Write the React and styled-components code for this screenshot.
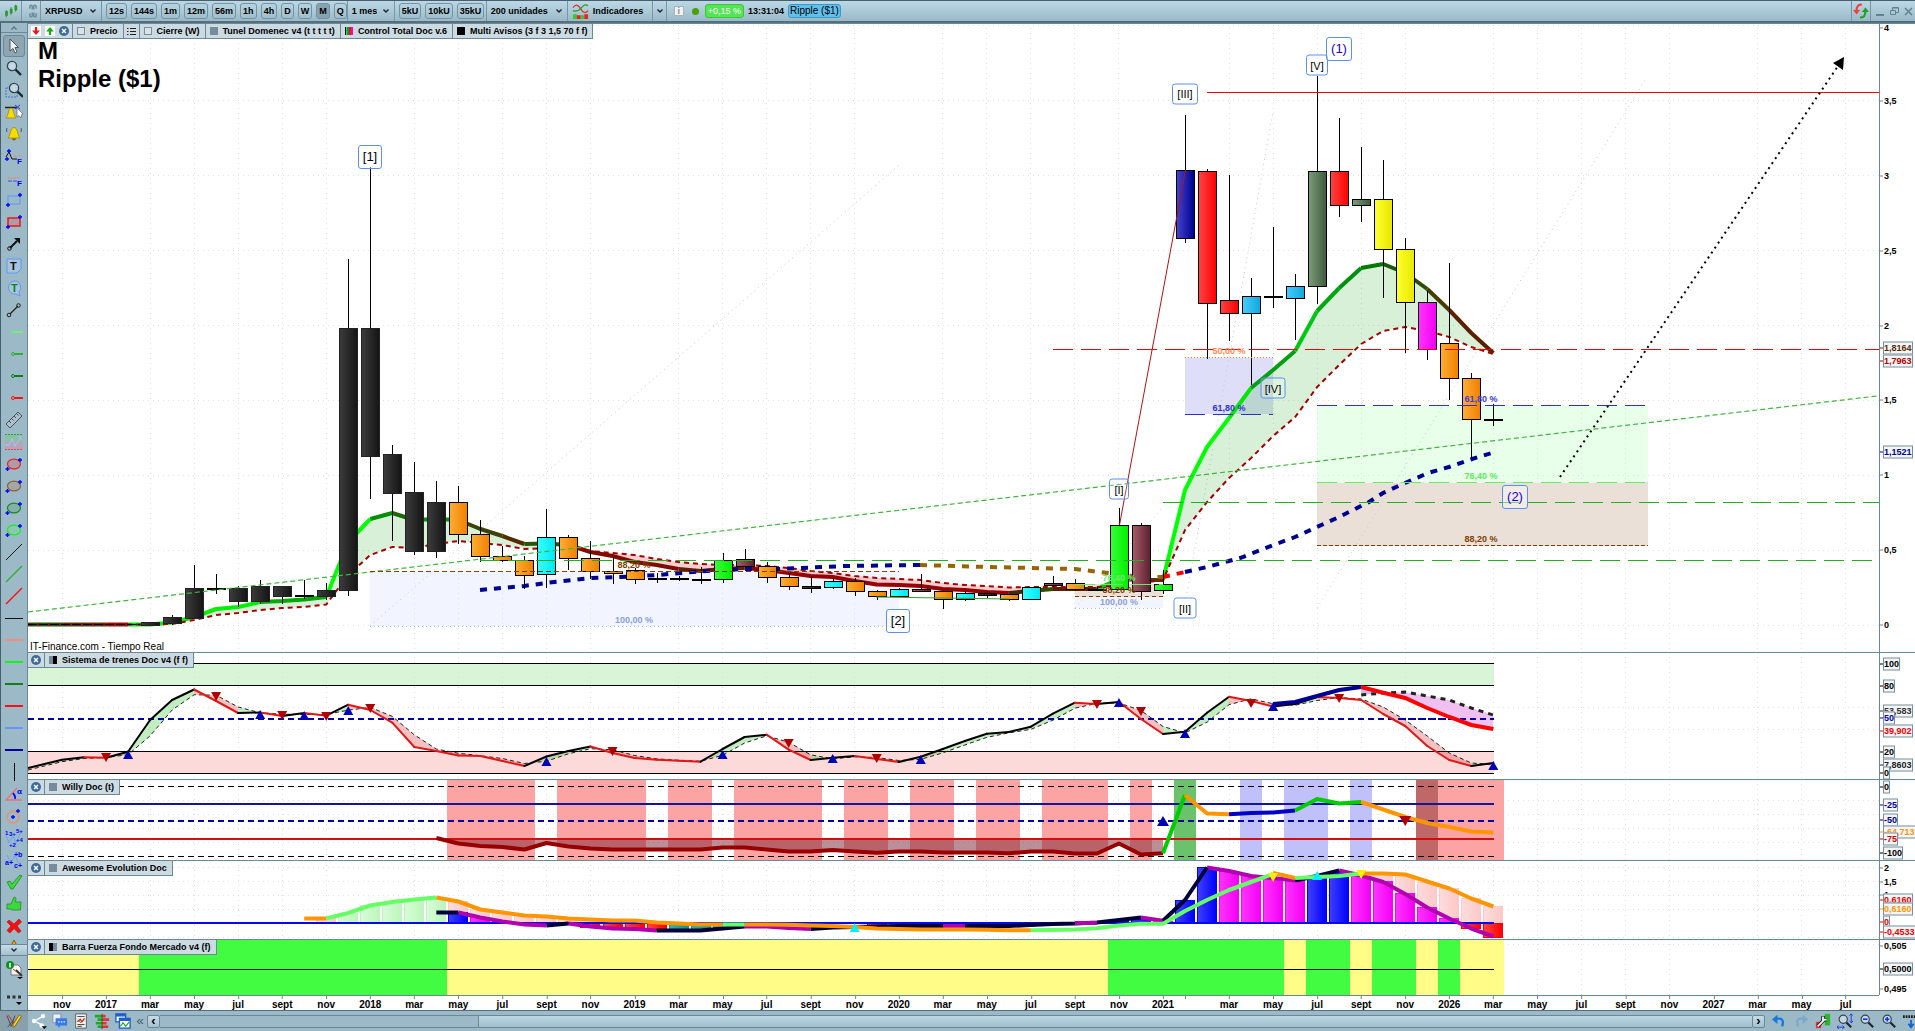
import React from 'react';
import styled, { createGlobalStyle } from 'styled-components';

// plot coordinates: one bar every 22px, prices at 150px per unit
const LEFT = 28;
const WIDTH = 1851;
const barX = (i) => 62 + 22.02 * i;
const priceY = (p) => 625.5 - 150 * p;
const leftPct = (x) => `${((x - LEFT) / WIDTH) * 100}%`;

const PANELS = {
  price: { top: 23, height: 629 },
  trains: { top: 652, height: 127 },
  willy: { top: 779, height: 81 },
  awesome: { top: 860, height: 79 },
  force: { top: 939, height: 56 },
};

const GRADIENTS = {
  black: ['#3c3c3c', '#141414'],
  orange: ['#ffae35', '#f08000'],
  cyan: ['#38ffff', '#00e8f4'],
  green: ['#38ff38', '#00ee00'],
  maroon: ['#a85c6a', '#5c2030'],
  navy: ['#4444cc', '#000090'],
  red: ['#ff4444', '#ff0000'],
  sky: ['#48ccff', '#10a8dc'],
  sage: ['#7c9c7c', '#3c5c3c'],
  yellow: ['#ffff30', '#e8e800'],
  magenta: ['#ff34ff', '#f400f4'],
  blue: ['#4040ff', '#0000ff'],
  teal: ['#2cb4b4', '#109090'],
  palegreen: ['#d8fcd8', '#bcf6bc'],
  palered: ['#fedcdc', '#fcc8c8'],
};

// [bar, high, bodyTop, bodyBottom, low, colour]
const CANDLES = [
  [4, 622, 622, 625, 625, 'black'],
  [5, 615, 617, 623, 625, 'black'],
  [6, 565, 588, 618, 619, 'black'],
  [7, 574, 588, 589, 594, 'black'],
  [8, 586, 588, 601, 607, 'black'],
  [9, 580, 586, 601, 604, 'black'],
  [10, 586, 586, 596, 604, 'black'],
  [11, 580, 595, 596, 599, 'black'],
  [12, 583, 590, 596, 600, 'black'],
  [13, 259, 328, 590, 596, 'black'],
  [14, 167, 328, 456, 499, 'black'],
  [15, 445, 454, 493, 541, 'black'],
  [16, 462, 492, 551, 555, 'black'],
  [17, 481, 502, 551, 558, 'black'],
  [18, 486, 502, 534, 544, 'orange'],
  [19, 520, 534, 556, 562, 'orange'],
  [20, 546, 556, 560, 562, 'orange'],
  [21, 556, 560, 575, 589, 'orange'],
  [22, 509, 537, 574, 588, 'cyan'],
  [23, 535, 537, 558, 570, 'orange'],
  [24, 541, 558, 571, 579, 'orange'],
  [25, 557, 571, 573, 584, 'orange'],
  [26, 568, 570, 579, 584, 'orange'],
  [27, 573, 578, 579, 583, 'black'],
  [28, 576, 578, 579, 581, 'black'],
  [29, 567, 579, 580, 584, 'black'],
  [30, 553, 560, 579, 583, 'green'],
  [31, 549, 559, 566, 568, 'maroon'],
  [32, 562, 566, 577, 583, 'orange'],
  [33, 573, 577, 586, 590, 'orange'],
  [34, 576, 586, 588, 593, 'black'],
  [35, 579, 581, 587, 589, 'cyan'],
  [36, 578, 581, 591, 596, 'orange'],
  [37, 590, 591, 596, 600, 'orange'],
  [38, 588, 589, 596, 597, 'cyan'],
  [39, 574, 589, 591, 592, 'maroon'],
  [40, 591, 591, 599, 609, 'orange'],
  [41, 592, 593, 599, 601, 'cyan'],
  [42, 591, 593, 595, 598, 'black'],
  [43, 594, 594, 599, 601, 'orange'],
  [44, 587, 587, 599, 600, 'cyan'],
  [45, 576, 583, 585, 587, 'maroon'],
  [46, 579, 583, 589, 591, 'orange'],
  [47, 587, 589, 590, 591, 'black'],
  [48, 508, 525, 589, 589, 'green'],
  [49, 523, 525, 591, 600, 'maroon'],
  [50, 570, 584, 590, 594, 'green'],
  [51, 115, 170, 238, 243, 'navy'],
  [52, 169, 171, 303, 359, 'red'],
  [53, 175, 300, 313, 341, 'red'],
  [54, 278, 296, 313, 385, 'sky'],
  [55, 227, 296, 297, 308, 'red'],
  [56, 274, 286, 298, 340, 'sky'],
  [57, 76, 171, 286, 304, 'sage'],
  [58, 118, 171, 205, 217, 'red'],
  [59, 147, 199, 205, 222, 'sage'],
  [60, 160, 199, 249, 298, 'yellow'],
  [61, 238, 249, 302, 353, 'yellow'],
  [62, 291, 302, 349, 360, 'magenta'],
  [63, 263, 343, 378, 400, 'orange'],
  [64, 373, 378, 419, 458, 'orange'],
  [65, 404, 419, 420, 426, 'black'],
];

const TUNNEL_TOP = [
  624.5, 624.5, 624.5, 624.5, 624.5, 622.5, 617, 609, 607, 602, 601, 599.5, 597, 542, 519, 513, 520,
  519, 520, 529, 536, 544, 543.5, 545, 552, 556, 562, 565, 569, 571, 569, 568, 570, 573, 576, 577,
  581, 584.5, 585, 586, 589, 590, 592, 593, 591, 589, 589, 589, 579, 580, 580, 490, 447, 418, 388,
  370, 351, 311, 288, 268, 264, 273, 289, 310, 333, 353,
];

const TUNNEL_LOW = [
  624.5, 624.5, 624.5, 624.5, 624.5, 624, 620, 615, 613, 610, 608, 607, 604.5, 575, 555, 547, 548,
  544, 541, 543, 545, 549, 548, 546, 551, 553, 555, 559, 562, 564, 565, 565, 566, 568, 571, 573,
  576, 578, 579, 580, 583, 585, 586, 587.5, 587, 587, 587, 587, 586, 583, 580, 530, 502, 478, 458,
  436, 417, 387, 365, 344, 331, 327, 331, 337, 347, 354,
];

// [last bar of the run, colour]
const TUNNEL_COLORS = [
  [2, '#55400a'], [3, '#a01010'], [9, '#00f000'], [12, '#00a800'], [14, '#00ff00'], [15, '#009000'],
  [16, '#1a6a00'], [18, '#0a9010'], [20, '#3a4400'], [21, '#552a00'], [23, '#245800'],
  [28, '#7a0c00'], [31, '#602000'], [43, '#960000'], [44, '#402a00'], [45, '#2a5000'],
  [47, '#5a2000'], [48, '#00d000'], [50, '#4a3a00'], [53, '#00ff00'], [54, '#00e800'],
  [56, '#00a010'], [57, '#00c810'], [58, '#00a810'], [59, '#009010'], [60, '#007a00'],
  [61, '#1a5a00'], [62, '#2f4d00'], [63, '#453c00'], [65, '#5a2000'],
];

const TRAIN = [
  759.7, 757.3, 757.7, 751.7, 720, 700, 689.5, 701, 713, 712.5, 716, 713, 715.7, 704.7, 710, 722.7,
  747, 751, 755.5, 756, 761, 766, 756.5, 751, 746.5, 753, 758, 759.7, 760.7, 761.7, 749, 737, 734.7,
  749.7, 760, 757.7, 756, 759, 762, 756.7, 749, 741, 733.7, 732, 726.7, 713.7, 702.7, 704, 702, 719,
  734, 731.7, 712.7, 696.7, 701, 706.5, 704, 697, 698, 700, 714, 726, 746, 760, 766, 763,
];

const TRAIN_MARKS = [
  ['down', 2, 757], ['up', 3, 755], ['down', 7, 696], ['up', 9, 715], ['down', 10, 715],
  ['up', 11, 716], ['down', 12, 716], ['up', 13, 711], ['down', 14, 708], ['up', 22, 762],
  ['down', 25, 751], ['up', 30, 755], ['down', 33, 743], ['up', 35, 759], ['down', 37, 758],
  ['up', 39, 760], ['down', 47, 704], ['up', 48, 703], ['down', 49, 711], ['up', 51, 734],
  ['down', 54, 703], ['up', 55, 707], ['down', 58, 698], ['up', 65, 766],
];

const WILLY_BANDS = [
  [17.5, 21.5, '#fca4a4'], [22.5, 26.5, '#fca4a4'], [27.5, 29.5, '#fca4a4'],
  [30.5, 34.5, '#fca4a4'], [35.5, 37.5, '#fca4a4'], [38.5, 40.5, '#fca4a4'],
  [41.5, 43.5, '#fca4a4'], [44.5, 47.5, '#fca4a4'], [48.5, 49.5, '#fca4a4'],
  [50.5, 51.5, '#6ac26a'], [53.5, 54.5, '#c0c0fa'], [55.5, 57.5, '#c0c0fa'],
  [58.5, 59.5, '#c0c0fa'], [61.5, 62.5, '#c06868'], [62.5, 65.5, '#fca4a4'],
];

const WILLY_LOW = [
  838, 843.5, 846, 847, 849.5, 843, 846.5, 848.5, 849.5, 849.5, 849.5, 849.5, 849.5, 847.5, 847.5,
  849.5, 851.5, 851.5, 850, 851.5, 852.7, 851.5, 851.5, 852.5, 852.5, 852.5, 853.3, 851.5, 851.5,
  853.5, 853.5, 843.5, 854.5, 853.3,
];

const FORCE_BANDS = [
  [-1.5, 3.5, 0], [3.5, 17.5, 1], [17.5, 47.5, 0], [47.5, 55.5, 1], [55.5, 56.5, 0],
  [56.5, 58.5, 1], [58.5, 59.5, 0], [59.5, 61.5, 1], [61.5, 62.5, 0], [62.5, 63.5, 1],
  [63.5, 65.5, 0],
];

// [bar, y, colour]
const AWESOME_BARS = [
  [12, 918, 'palered'], [13, 913, 'palegreen'], [14, 905, 'palegreen'], [15, 902, 'palegreen'],
  [16, 899, 'palegreen'], [17, 897, 'palegreen'], [18, 901, 'palered'], [19, 909, 'palered'],
  [20, 912, 'palered'], [21, 915, 'palered'], [22, 916, 'palered'], [23, 918, 'palered'],
  [24, 920, 'palered'], [25, 920, 'palered'], [18, 912, 'blue'], [19, 917, 'magenta'],
  [20, 921, 'magenta'], [24, 927, 'red'], [25, 928, 'red'], [26, 929, 'red'], [27, 930, 'red'],
  [28, 929, 'teal'], [29, 929, 'teal'], [30, 928, 'teal'], [37, 926, 'red'], [38, 926, 'teal'],
  [48, 920, 'blue'], [49, 918, 'blue'], [50, 921, 'magenta'], [51, 900, 'blue'], [52, 867, 'blue'],
  [53, 871, 'magenta'], [54, 875, 'magenta'], [55, 878, 'magenta'], [56, 880, 'magenta'],
  [57, 878, 'blue'], [58, 872, 'blue'], [59, 876, 'magenta'], [60, 874, 'palered'],
  [61, 875, 'palered'], [62, 882, 'palered'], [63, 888, 'palered'], [64, 898, 'palered'],
  [65, 906, 'palered'], [60, 881, 'magenta'], [61, 893, 'magenta'], [62, 907, 'magenta'],
  [63, 918, 'magenta'], [64, 928, 'red'], [65, 937, 'red'],
];

const MONTHS = ['nov', '', 'mar', 'may', 'jul', 'sept'];
const DATES = [];
for (let i = 0, n = 0; i <= 50; i += 2, n += 1) {
  const year = n % 6 === 1;
  DATES.push({ i, year, text: year ? String(2017 + (n - 1) / 6) : MONTHS[n % 6] });
}
['mar', 'may', 'jul', 'sept', 'nov', '2026', 'mar', 'may', 'jul', 'sept', 'nov', '2027', 'mar', 'may', 'jul'].forEach(
  (text, n) => DATES.push({ i: 53 + 2 * n, year: text.startsWith('20'), text })
);

const series = (from, ys) => ys.map((y, n) => `${barX(from + n)},${y}`).join(' ');

const Grid = ({ panel, rows }) => (
  <g stroke="#dfdfdf" strokeDasharray="1 4" shapeRendering="crispEdges">
    {DATES.filter((d) => !d.year).map((d) => (
      <line key={d.i} x1={barX(d.i)} x2={barX(d.i)} y1={panel.top} y2={panel.top + panel.height} />
    ))}
    {rows.map((y) => (
      <line key={y} x1={LEFT} x2={LEFT + WIDTH} y1={y} y2={y} />
    ))}
  </g>
);

const Chart = ({ panel, children }) => (
  <ChartSvg viewBox={`${LEFT} ${panel.top} ${WIDTH} ${panel.height}`} preserveAspectRatio="none" aria-hidden="true">
    {children}
  </ChartSvg>
);

const HLine = ({ y, x1 = LEFT, x2 = 1494, color = '#000', width = 1, dash }) => (
  <line x1={x1} x2={x2} y1={y} y2={y} stroke={color} strokeWidth={width} strokeDasharray={dash} shapeRendering="crispEdges" />
);

const Mark = ({ dir, i, y, size = 5, color }) => {
  const x = barX(i);
  const s = dir === 'up' ? 1 : -1;
  return (
    <polygon
      points={`${x - size},${y + 4 * s} ${x + size},${y + 4 * s} ${x},${y - size * s}`}
      fill={color || (dir === 'up' ? '#0000b8' : '#b00000')}
    />
  );
};

const Candle = ({ data }) => {
  const [i, high, top, bottom, low, color] = data;
  const x = Math.round(barX(i));
  return (
    <g shapeRendering="crispEdges">
      <rect x={x} y={high} width="1" height={low - high} fill="#000" />
      <rect
        x={x - 8.5}
        y={top + 0.5}
        width="18"
        height={Math.max(bottom - top, 0.5)}
        fill={`url(#fill-${color})`}
        stroke={color === 'black' ? (bottom - top < 3 ? '#000' : '#222') : '#000'}
      />
    </g>
  );
};

const PriceChart = () => {
  let start = -1;
  const runs = TUNNEL_COLORS.map(([end, color]) => {
    const from = Math.max(start, 0);
    const run = { from, ys: TUNNEL_TOP.slice(from, end + 1), color };
    start = end;
    return run;
  });
  const between = (a, b) =>
    `${series(a, TUNNEL_TOP.slice(a, b + 1))} ${TUNNEL_LOW.slice(a, b + 1)
      .map((y, n) => `${barX(a + n)},${y}`)
      .reverse()
      .join(' ')}`;
  return (
    <Chart panel={PANELS.price}>
      <defs>
        {Object.entries(GRADIENTS).map(([name, [a, b]]) => (
          <linearGradient key={name} id={`fill-${name}`}>
            <stop offset="0" stopColor={a} />
            <stop offset="1" stopColor={b} />
          </linearGradient>
        ))}
      </defs>
      <rect x="370" y="571" width="529" height="55" fill="#f2f5ff" />
      <rect x="1185" y="358" width="88" height="56" fill="#dedef8" />
      <rect x="1317" y="406" width="331" height="77" fill="#e8ffea" />
      <rect x="1317" y="483" width="331" height="63" fill="#eae0d8" />
      <rect x="1075" y="584" width="88" height="13" fill="#eae0d8" />
      <rect x="1075" y="597" width="88" height="11" fill="#f2f5ff" />
      <Grid panel={PANELS.price} rows={[0, 0.5, 1, 1.5, 2, 2.5, 3, 3.5, 4].map(priceY)} />
      <g stroke="#c8c8c8" strokeDasharray="1 4" fill="none">
        <path d="M370 626L899 165M1317 608L1647 77M1187 593L1273 112M1075 608L1163 507" />
      </g>
      <polygon points={between(4, 23)} fill="#3cb43c" fillOpacity=".2" />
      <polygon points={between(23, 44)} fill="#e82020" fillOpacity=".22" />
      <polygon points={between(50, 65)} fill="#3cb43c" fillOpacity=".2" />
      <polyline points="28,624.5 62,624.5" stroke="#1f6010" strokeWidth="4" fill="none" />
      {runs.map((r) => (
        <polyline key={r.from} points={series(r.from, r.ys)} stroke={r.color} strokeWidth="4" fill="none" strokeLinejoin="round" />
      ))}
      <polyline points={`28,624.5 ${series(0, TUNNEL_LOW)}`} stroke="#a00000" strokeWidth="2" strokeDasharray="5 4" fill="none" />
      <HLine y={624.5} x2={140} dash="9 2" />
      <g fill="none" strokeWidth="4" strokeDasharray="7 7">
        <polyline points="480,590 524,586 546,583 592,578 620,577 657,575 706,571 744,569 778,569 800,568 845,566 920,565" stroke="#000090" />
        <polyline points="920,565 988,567 1075,569 1108,573 1141,577 1163,577" stroke="#966400" />
        <polyline points="1163,577 1185,572" stroke="#ff0000" />
        <polyline
          points="1185,572 1207,567 1240,558 1279,543 1295,537 1317,527 1339,517 1369,502 1383,493 1405,483 1428,473 1449,467 1472,459 1492,453"
          stroke="#000090"
        />
      </g>
      {CANDLES.map((c) => (
        <Candle key={c[0]} data={c} />
      ))}
      <path d="M876 597L1009 599" stroke="#30a030" />
      <path d="M1119.5 525L1185.5 170" stroke="#b01414" />
      <path d="M28 612L1877 396" stroke="#40b440" strokeWidth="1.2" strokeDasharray="5 3" />
      <HLine y={92.5} x1={1207} x2={1879} color="#f00000" />
      <HLine y={349.5} x1={1053} x2={1879} color="#f00000" dash="20 8" />
      <HLine y={502.5} x1={1163} x2={1879} color="#20b020" dash="20 8" />
      <HLine y={560.5} x1={480} x2={1879} color="#20b020" dash="20 8" />
      <HLine y={571.5} x1={370} x2={899} color="#804000" dash="5 3" />
      <HLine y={626.5} x1={370} x2={899} color="#a8b8f0" dash="1 3" />
      <HLine y={357.5} x1={1185} x2={1273} color="#ff7040" dash="1 2" />
      <HLine y={414.5} x1={1185} x2={1273} color="#3030d0" dash="20 8" />
      <HLine y={405.5} x1={1317} x2={1648} color="#3030d0" dash="20 8" />
      <HLine y={482.5} x1={1317} x2={1648} color="#60f060" dash="20 8" />
      <HLine y={545.5} x1={1317} x2={1648} color="#804000" dash="4 2" />
      <HLine y={584.5} x1={1075} x2={1163} color="#60f060" dash="20 8" />
      <HLine y={596.5} x1={1075} x2={1163} color="#804000" dash="4 3" />
      <HLine y={608.5} x1={1075} x2={1163} color="#a8b8f0" dash="1 3" />
      <path d="M1560 477L1838 66" stroke="#000" strokeWidth="2" strokeDasharray="2 4" />
      <polygon points="1844,57 1833,63 1843,70" />
    </Chart>
  );
};

const TrainsChart = () => {
  const signal = TRAIN.map((y, n) => (n ? (y + TRAIN[n - 1]) / 2 : y + 2));
  return (
    <Chart panel={PANELS.trains}>
      <rect x="28" y="663" width="1466" height="22" fill="#d8f5d8" />
      <rect x="28" y="751" width="1466" height="22" fill="#fddada" />
      <Grid panel={PANELS.trains} rows={[707.5, 729.5]} />
      <polygon points={`28,768 ${barX(0)},${TRAIN[0]} ${barX(0)},${signal[0]} 28,770`} fill="#d0d8a8" />
      {TRAIN.slice(1).map((y, n) => {
        const [a, b] = [barX(n), barX(n + 1)];
        return (
          <polygon
            key={n}
            points={`${a},${TRAIN[n]} ${b},${y} ${b},${signal[n + 1]} ${a},${signal[n]}`}
            fill={y < TRAIN[n] ? '#20c020' : '#d02020'}
            fillOpacity=".28"
          />
        );
      })}
      <HLine y={663.5} />
      <HLine y={685.5} />
      <HLine y={718.5} color="#0000a0" width={2} dash="6 4" />
      <HLine y={751.5} />
      <HLine y={773.5} />
      <polyline points={`28,770 ${series(0, signal)}`} fill="none" stroke="#222" strokeDasharray="4 3" />
      <path d={`M28 768L${barX(0)} ${TRAIN[0]}`} stroke="#000" strokeWidth="2" />
      {TRAIN.slice(1).map((y, n) => (
        <line
          key={n}
          x1={barX(n)}
          y1={TRAIN[n]}
          x2={barX(n + 1)}
          y2={y}
          stroke={y < TRAIN[n] ? '#000' : '#e01818'}
          strokeWidth="2"
          strokeLinecap="round"
        />
      ))}
      <polygon points={`${series(59, [687, 693])} ${barX(60)},693 ${barX(59)},695`} fill="#c0c0e8" />
      <polygon points={`${series(60, [692.7, 698, 708, 717, 725, 729])} 1493,715 1472,708 1449,700 1428,696 1405,692 1383,693`} fill="#f0c0f0" />
      <HLine y={718.5} x1={1400} color="#0000a0" width={2} dash="6 4" />
      <polyline points={series(59, [695, 693, 692, 696, 700, 708, 715])} fill="none" stroke="#222" strokeWidth="3" strokeDasharray="5 5" />
      <polyline points={series(55, [704, 702, 696, 690, 687])} fill="none" stroke="#000090" strokeWidth="4" />
      <polyline points={series(59, [687, 692.7, 698, 708, 717, 725, 729])} fill="none" stroke="#ff0000" strokeWidth="4" />
      {TRAIN_MARKS.map(([dir, i, y]) => (
        <Mark key={i} dir={dir} i={i} y={y} />
      ))}
    </Chart>
  );
};

const WillyChart = () => (
  <Chart panel={PANELS.willy}>
    <Grid panel={PANELS.willy} rows={[800.5, 814.5, 828.5, 842.5]} />
    {WILLY_BANDS.map(([a, b, color]) => (
      <rect key={a} x={barX(a)} y="779" width={barX(b) - barX(a)} height="81" fill={color} shapeRendering="crispEdges" />
    ))}
    <polygon points={`${barX(17)},839 ${series(17, WILLY_LOW)} ${barX(50)},839`} fill="#782030" fillOpacity=".5" />
    <HLine y={786.5} dash="6 4" />
    <HLine y={804} color="#1414a0" width={2} />
    <HLine y={821} color="#0000a0" width={2} dash="6 4" />
    <HLine y={839} color="#d01010" width={2} />
    <HLine y={856.5} dash="6 4" />
    <g fill="none" strokeWidth="4" strokeLinejoin="round">
      <polyline points={series(17, WILLY_LOW)} stroke="#980000" />
      <polyline points={series(50, [853.3, 795])} stroke="#00cc00" />
      <polyline points={series(51, [795, 813.5, 814.3])} stroke="#ff9600" />
      <polyline points={series(53, [814.3, 813, 812.5, 810.5])} stroke="#0000c8" />
      <polyline points={series(56, [810.5, 799, 803.5, 802])} stroke="#00cc00" />
      <polyline points={series(59, [802, 809.5, 817, 823, 827, 831.5, 832.5])} stroke="#ff9600" />
    </g>
    <Mark dir="up" i={50} y={822} size={6} />
    <Mark dir="down" i={61} y={820} size={6} />
  </Chart>
);

const AwesomeChart = () => (
  <Chart panel={PANELS.awesome}>
    <Grid panel={PANELS.awesome} rows={[867.5, 881.5, 895.5, 909.5, 937.5]} />
    {AWESOME_BARS.map(([i, y, color]) => (
      <rect
        key={`${i}${color}`}
        x={Math.round(barX(i)) - 9.5}
        y={Math.min(y, 923) + 0.5}
        width="19"
        height={Math.abs(923 - y)}
        fill={`url(#fill-${color})`}
        stroke={GRADIENTS[color][1]}
        shapeRendering="crispEdges"
      />
    ))}
    <HLine y={923} color="#0808f0" width={2} />
    <g fill="none" strokeWidth="4" strokeLinejoin="round">
      <g stroke="#b000b0">
        <polyline points={series(18, [912.5, 917.5, 921.5, 924.5, 925.5])} />
        <polyline points={series(23, [923.5, 926.5, 928.5, 929, 930.5])} />
        <polyline points={series(31, [926.5, 926.5, 928, 929])} />
        <polyline points={series(49, [917.5, 920.7])} />
        <polyline points={series(52, [867.5, 871, 876, 878, 880.5])} />
        <polyline points={series(58, [870.5, 875.5, 882, 894, 907.5, 918.5, 928.5, 936.5])} />
      </g>
      <g stroke="#000038">
        <polyline points={series(17, [912.5, 912.5])} />
        <polyline points={series(22, [925.5, 923.5])} />
        <polyline points={series(27, [930.5, 930.5, 930.5, 928.5, 926.5])} />
        <polyline points={series(34, [929, 927.5, 927, 926.5, 926, 926, 926, 926, 926, 926, 925, 924, 923.5, 922.5, 920, 917.5])} />
        <polyline points={series(50, [920.7, 900, 867.5])} />
        <polyline points={series(56, [880.5, 876, 870.5])} />
      </g>
      <path d="M943 926L965 926M1075 923L1097 923" stroke="#b000b0" />
      <g stroke="#ff9600">
        <polyline points={series(11, [918.5, 918.5])} />
        <polyline points={series(17, [897.5, 901.5, 909.5, 912.5, 915.5, 916.5, 918.5, 919.5, 920.5, 920.5, 922.5, 923.5, 924.5, 924.5])} />
        <polyline
          points={series(31, [924.5, 924.5, 924.8, 925.5, 926, 927, 928.5, 929, 929.5, 929.5, 929.6, 929.7, 930.3, 930.3])}
        />
        <polyline points={series(55, [873, 878])} />
        <polyline points={series(59, [873.5, 873.5, 874.5, 881.5, 888.5, 898.5, 906.5])} />
      </g>
      <g stroke="#66ff66">
        <polyline points={series(12, [918.5, 913, 905.5, 902, 899.5, 897.5])} />
        <polyline points={series(30, [924.5, 924.5])} />
        <polyline points={series(44, [930.3, 930, 929.5, 928.3, 925.5, 923.7, 923.7, 911, 900, 890, 882, 874])} />
        <polyline points={series(56, [878, 877, 876, 873.5])} />
      </g>
    </g>
    <Mark dir="up" i={36} y={928} color="#00f0ff" />
    <Mark dir="down" i={55} y={877} color="#ffee00" />
    <Mark dir="up" i={57} y={876} color="#00f0ff" />
    <Mark dir="down" i={59} y={874} color="#ffee00" />
  </Chart>
);

const ForceChart = () => (
  <Chart panel={PANELS.force}>
    <Grid panel={PANELS.force} rows={[944.5]} />
    {FORCE_BANDS.map(([a, b, on]) => (
      <rect key={a} x={barX(a)} y="939" width={barX(b) - barX(a)} height="56" fill={on ? '#42fc42' : '#fffd88'} shapeRendering="crispEdges" />
    ))}
    <HLine y={969.5} />
  </Chart>
);

const PRICE_NOTES = [
  ['[1]', 370, 157, 24, 24], ['[III]', 1185, 94, 26, 21], ['[V]', 1317, 65, 22, 21],
  ['(1)', 1339, 49, 26, 24], ['[I]', 1119, 489, 20, 21], ['[IV]', 1273, 388, 25, 21],
  ['[II]', 1185, 608, 23, 21], ['[2]', 898, 621, 24, 24], ['(2)', 1515, 497, 26, 24],
];

const FIBS = [
  ['88,20 %', 634, 565, '#804000'], ['100,00 %', 634, 620, '#8ca0d8'], ['50,00 %', 1229, 351, '#ff8850'],
  ['61,80 %', 1229, 408, '#3030d0'], ['61,80 %', 1481, 399, '#4040d8'], ['76,40 %', 1481, 476, '#60e860'],
  ['88,20 %', 1481, 539, '#804000'], ['76,40 %', 1119, 578, '#70e870'], ['88,20 %', 1119, 590, '#804000'],
  ['100,00 %', 1119, 602, '#8ca0d8'],
];

// [text, y, colour, boxed]
const SCALES = {
  price: [
    ['4', 27], ['3,5', 100], ['3', 175], ['2,5', 250], ['2', 325], ['1,5', 400], ['1', 475], ['0,5', 550],
    ['0', 625], ['1,8164', 348, '#5a2a08', true], ['1,7963', 361, '#b00000', true],
    ['1,1521', 452, '#000090', true],
  ],
  trains: [
    ['100', 663, '#000', true], ['80', 685, '#000', true], ['53,583', 710, '#333', true],
    ['50', 718, '#0000b0', true], ['39,902', 731, '#f00000', true], ['20', 752, '#000', true],
    ['7,8603', 765, '#222', true], ['0', 773, '#000', true],
  ],
  willy: [
    ['0', 786, '#000', true], ['-25', 804, '#0000a0', true], ['-50', 820, '#0000a0', true],
    ['-64,713', 832, '#ff9600', true], ['-75', 839, '#d00000', true], ['-100', 853, '#000', true],
  ],
  awesome: [
    ['2', 867], ['1,5', 881], ['1', 894], ['0,6160', 900, '#f00000', true],
    ['0,6160', 909, '#ff9600', true], ['0', 922, '#f00000', true], ['-0,4533', 932, '#f00000', true],
  ],
  force: [['0,505', 945], ['0,5000', 969, '#000', true], ['0,495', 989]],
};

const Scale = ({ name }) => {
  const { top, height } = PANELS[name];
  return (
    <ScaleColumn>
      {SCALES[name].map(([text, y, color, boxed]) => (
        <ScaleLabel key={`${text}${y}`} $color={color} $boxed={boxed} style={{ top: `${((y - top) / height) * 100}%` }}>
          {text}
        </ScaleLabel>
      ))}
    </ScaleColumn>
  );
};

/* icons */

const Icon = ({ size = 18, children }) => (
  <svg width={size} height={size} viewBox="0 0 18 18" fill="none" aria-hidden="true">
    {children}
  </svg>
);

const CloseIcon = () => (
  <svg width="10" height="10" viewBox="0 0 18 18" aria-hidden="true">
    <circle cx="9" cy="9" r="9" fill="#3d6a9c" />
    <path d="M5.5 5.5L12.5 12.5M12.5 5.5L5.5 12.5" stroke="#fff" strokeWidth="2.6" />
  </svg>
);

const Chevron = ({ up }) => (
  <svg width="6" height="4" viewBox="0 0 6 4" fill="none" aria-hidden="true">
    <path d={up ? 'M.5 3.5L3 1L5.5 3.5' : 'M.5 .5L3 3L5.5 .5'} stroke={up ? '#5c7884' : '#223'} strokeWidth="1.4" />
  </svg>
);

const Plus = ({ x, y }) => <path d={`M${x - 2} ${y}h4M${x} ${y - 2}v4`} stroke="#0000ff" strokeWidth="1.3" />;
const Magnifier = ({ children }) => (
  <>
    <path d="M10 10L16 16" stroke="#1c2830" strokeWidth="2.4" />
    <circle cx="7" cy="7" r="4.600" fill="#c4d8e4" stroke="#34464f" strokeWidth="1.3" />
    {children}
  </>
);
const Bell = () => (
  <>
    <path d="M9 2.500C5 3 6 9 3 13H15C12 9 13 3 9 2.500Z" fill="#f8dc00" stroke="#a08a00" strokeWidth=".8" />
    <path d="M7 13.500a2 2 0 0 0 4 0" fill="#806000" />
  </>
);
const EllipseTool = ({ color, fill }) => (
  <>
    <ellipse cx="9" cy="9" rx="6.500" ry="4.800" stroke={color} fill={fill} strokeWidth="1.2" />
    <Plus x={15} y={5} />
    <Plus x={2.5} y={14} />
  </>
);
const RayTool = ({ color }) => (
  <>
    <circle cx="8" cy="9" r="1.500" stroke={color} />
    <path d="M9 9H18" stroke={color} strokeWidth="2" />
  </>
);
const slash = (color, w) => <path d="M1 17L17 1" stroke={color} strokeWidth={w} />;
const bar = (color, w = 2) => <path d="M0 9H18" stroke={color} strokeWidth={w} shapeRendering="crispEdges" />;
const iconText = (x, y, text, color = '#0000ff', size = 8) => (
  <text x={x} y={y} fontSize={size} fontWeight="700" fill={color}>
    {text}
  </text>
);

const TOOLS = [
  ['Puntero', <path d="M5 2V14L8 11.500L10 16L12 15L10 10.500H13.500Z" fill="#eef4f8" stroke="#556" />],
  ['Lupa', <Magnifier />],
  [
    'Zoom de zona',
    <>
      <rect x="1" y="7" width="11" height="9" stroke="#3a78e0" strokeDasharray="2 1" />
      <g transform="translate(2 0)"><Magnifier /></g>
    </>,
  ],
  [
    'Alerta en objeto',
    <>
      <path d="M0 4.500H12" stroke="#222" strokeWidth="1.5" />
      <path d="M6 5C3 6 4 11 1 15H11C8 11 9 6 6 5Z" fill="#f8dc00" stroke="#a08a00" strokeWidth=".8" />
      <path d="M10 6L15 2M10 2L15 6" stroke="#2040e0" />
      <path d="M12 5V14L14 12.500L16 15L17 11H18Z" fill="#fff" stroke="#667" strokeWidth=".7" />
    </>,
  ],
  [
    'Alertas',
    <>
      <Bell />
      <path d="M2 7Q1 5 2 3M16 7Q17 5 16 3" stroke="#556" />
    </>,
  ],
  [
    'Fibonacci extensión',
    <>
      <path d="M1 10L4 5L7 12H12" stroke="#111" />
      <path d="M6 9H17" stroke="#ff7a50" strokeDasharray="1 1" />
      <Plus x={4} y={4} />
      <Plus x={2} y={12} />
      {iconText(12, 17, 'F')}
    </>,
  ],
  [
    'Fibonacci',
    <>
      <path d="M3 9H15" stroke="#ff7a50" strokeDasharray="2 1" />
      <path d="M3 12H12" stroke="#3a50f0" strokeDasharray="4 1" />
      {iconText(12, 17, 'F')}
    </>,
  ],
  [
    'Rectángulo',
    <>
      <rect x="3" y="5" width="12" height="8" stroke="#5c98f8" />
      <Plus x={15} y={4} />
      <Plus x={3} y={14} />
    </>,
  ],
  [
    'Rectángulo rojo',
    <>
      <rect x="3" y="5" width="12" height="8" stroke="#e81818" fill="#b09aa8" strokeWidth="1.5" />
      <Plus x={15} y={4} />
      <Plus x={3} y={14} />
    </>,
  ],
  [
    'Flecha',
    <>
      <path d="M5 13L12 6" stroke="#111" strokeWidth="2" />
      <path d="M9 3H15V9Z" fill="#111" />
      <circle cx="4.500" cy="13.500" r="1.800" stroke="#111" />
    </>,
  ],
  [
    'Texto',
    <>
      <path d="M2 2H16V12L12 16H2Z" stroke="#5c98f8" fill="#a8c4dc" />
      {iconText(5, 13, 'T', '#111', 11)}
    </>,
  ],
  [
    'Comentario',
    <>
      <path d="M9 2A6.500 6.500 0 1 0 11 15L15 17L14 13A6.500 6.500 0 0 0 9 2Z" stroke="#5c98f8" fill="#a8c4dc" />
      {iconText(6, 13, 'T', '#108020', 11)}
    </>,
  ],
  [
    'Segmento',
    <>
      <path d="M5 13L13 5" stroke="#222" strokeWidth="1.3" />
      <circle cx="4" cy="14" r="1.800" stroke="#222" />
      <circle cx="13.500" cy="4.500" r="1.800" stroke="#222" />
    </>,
  ],
  ['Semirrecta clara', <RayTool color="#70f078" />],
  ['Semirrecta', <RayTool color="#30b030" />],
  ['Semirrecta verde', <RayTool color="#108018" />],
  ['Semirrecta roja', <RayTool color="#ff1010" />],
  [
    'Regla',
    <>
      <path d="M1 13L13 1L17 5L5 17Z" stroke="#445560" fill="#aebfca" />
      <path d="M4 10L6 12M6.500 7.500L8.500 9.500M9 5L11 7M11.500 2.500L13.500 4.500" stroke="#445560" />
    </>,
  ],
  [
    'Canal',
    <>
      <rect y="1" width="18" height="8" fill="#8cc0a0" />
      <rect y="9" width="18" height="8" fill="#b8a4b4" />
      <path d="M0 1.500H18" stroke="#30a040" strokeDasharray="2 1" />
      <path d="M0 16.500H18" stroke="#e05050" strokeDasharray="2 1" />
      <path d="M0 12L4 12L7 6L10 13L16 4M13 4H16V7" stroke="#a8bcf8" strokeWidth="1.3" />
    </>,
  ],
  ['Elipse roja', <EllipseTool color="#f02020" fill="#b09aa8" />],
  ['Elipse marrón', <EllipseTool color="#9a5a28" fill="#a0a8a8" />],
  ['Elipse verde', <EllipseTool color="#108828" fill="#84b0a8" />],
  ['Elipse clara', <EllipseTool color="#10f020" fill="#8cc8b0" />],
  ['Recta negra', slash('#111', 1)],
  ['Recta verde', slash('#30b030', 1.5)],
  ['Recta roja', slash('#ff1010', 1.5)],
  ['Horizontal negra', bar('#111', 1)],
  ['Horizontal rosa', bar('#ff8a78')],
  ['Horizontal clara', bar('#10f810')],
  ['Horizontal verde', bar('#108018')],
  ['Horizontal roja', bar('#ff1010')],
  ['Horizontal azul', bar('#6098ff')],
  ['Horizontal marino', bar('#0000a0')],
  ['Vertical', <path d="M9.500 0V18" stroke="#111" shapeRendering="crispEdges" />],
  [
    'Ángulo',
    <>
      <path d="M12 3L1 15H17" stroke="#f07070" strokeWidth="1.3" />
      <path d="M8 8Q11 11 10 14M8 8L10 12" stroke="#0000ff" strokeWidth="1.5" />
      {iconText(12, 9, 'α')}
    </>,
  ],
  [
    'Ciclo',
    <>
      <circle cx="8" cy="10" r="6" stroke="#f09060" strokeWidth="1.3" />
      <Plus x={8} y={10} />
      <Plus x={13} y={4} />
    </>,
  ],
  [
    'Ondas impulso',
    <>
      <path d="M1 6L4 14L8 7L11 14L16 2" stroke="#70a0ff" />
      {iconText(0, 6, '1', '#0000ff', 6)}
      {iconText(4, 18, '+2', '#0000ff', 6)}
      {iconText(4, 7, '3+', '#0000ff', 6)}
      {iconText(11, 13, '+4', '#0000ff', 6)}
      {iconText(11, 4, '5+', '#0000ff', 6)}
    </>,
  ],
  [
    'Ondas corrección',
    <>
      <path d="M2 4L6 12L10 4L14 13" stroke="#70a0ff" />
      {iconText(0, 14, 'a+', '#0000ff', 7)}
      {iconText(9, 6, '+b', '#0000ff', 7)}
      {iconText(9, 17, 'c+', '#0000ff', 7)}
    </>,
  ],
  ['Validar', <path d="M2 9L5 8L7 11L15 2L17 3L8 16H6Z" fill="#3cd83c" stroke="#288828" strokeWidth=".8" />],
  [
    'Me gusta',
    <path d="M2 9H6L9 2L11 3L10.500 7H16L15.500 15H7L6 14H2Z" fill="#3cd83c" stroke="#288828" strokeWidth=".8" strokeLinejoin="round" />,
  ],
  ['Eliminar', <path d="M4 3L9 7L14 2L16.500 5L12 9L16 14L13.500 16L9 11.500L5 16L2 13.500L6 9L2 5Z" fill="#f81010" stroke="#a01010" strokeWidth=".6" />],
  ['Aviso', <path d="M9 1L17 16H1Z" fill="#f0a020" stroke="#806010" />],
];

const TIMEFRAMES = ['12s', '144s', '1m', '12m', '56m', '1h', '4h', 'D', 'W', 'M', 'Q'];

const Picker = ({ label, value }) => (
  <PickerBox>
    <PickerSelect aria-label={label} defaultValue={value}>
      <option>{value}</option>
    </PickerSelect>
    <Chevron />
  </PickerBox>
);

const Title = ({ swatch, children }) => (
  <Legend>
    <LegendButton type="button" aria-label="Cerrar indicador">
      <CloseIcon />
    </LegendButton>
    <LegendName>
      <Swatch $fill={swatch} />
      {children}
    </LegendName>
  </Legend>
);

const SubPanel = ({ name, title, swatch, children }) => (
  <Panel $height={PANELS[name].height}>
    <Plot>
      {children}
      <Title swatch={swatch}>{title}</Title>
    </Plot>
    <Scale name={name} />
  </Panel>
);

const App = () => (
  <>
    <GlobalStyle />
    <Window>
      <TopBar>
        <BarCell $w={22}>
          <Icon size={14}>
            <path d="M3 8V17M9 4V14M15 1V10" stroke="#207820" />
            <path d="M1.500 9h3.500v6h-3.500zM7.500 6h3.500v6h-3.500zM13.500 2h3.500v6h-3.500z" fill="#2c982c" />
          </Icon>
        </BarCell>
        <BarCell $w={17} $narrow>
          <Icon size={14}>
            <path d="M5 6V3a1.500 1.500 0 0 1 3 0v4M10 7V3a1.500 1.500 0 0 1 3 0v3M5 12v3a1.500 1.500 0 0 0 3 0v-4M10 11v4a1.500 1.500 0 0 0 3 0v-3" stroke="#6c8894" strokeWidth="1.8" />
          </Icon>
        </BarCell>
        <BarCell $w={61}>
          <Picker label="Valor" value="XRPUSD" />
        </BarCell>
        <BarCell $w={239}>
          {TIMEFRAMES.map((t) => (
            <FrameButton key={t} type="button" $active={t === 'M'}>
              {t}
            </FrameButton>
          ))}
        </BarCell>
        <BarCell $w={47}>
          <Picker label="Periodo" value="1 mes" />
        </BarCell>
        <BarCell $w={92}>
          {['5kU', '10kU', '35kU'].map((t) => (
            <FrameButton key={t} type="button">
              {t}
            </FrameButton>
          ))}
        </BarCell>
        <BarCell $w={81}>
          <Picker label="Unidades" value="200 unidades" />
        </BarCell>
        <BarCell $w={85}>
          <TextButton type="button">
            <Icon size={17}>
              <path d="M1 5Q5 -1 9 6T17 8" stroke="#e03030" strokeWidth="1.3" />
              <path d="M1 8Q6 10 10 5T17 3" stroke="#28a028" strokeWidth="1.3" />
              <path d="M1 12h4v5H1zM9 13h4v4H9z" fill="#28d028" />
              <path d="M5 13h4v4H5zM13 12h4v5h-4z" fill="#f02020" />
            </Icon>
            Indicadores
          </TextButton>
        </BarCell>
        <BarCell $w={14}>
          <TextButton type="button" aria-label="Lista de indicadores">
            <Chevron />
          </TextButton>
        </BarCell>
        <Status>
          <InfoMark>i</InfoMark>
          <Dot />
          <Change>+0,15 %</Change>
          <span>13:31:04</span>
          <NameBadge>Ripple ($1)</NameBadge>
        </Status>
        <BarCell $w={20} $start>
          <Icon size={16}>
            <path d="M10 2Q4 1 4 9" stroke="#f04040" strokeWidth="2.4" />
            <path d="M0 8H8L4 13Z" fill="#f04040" />
            <path d="M8 16Q14 17 14 9" stroke="#20a020" strokeWidth="2.4" />
            <path d="M10 10H18L14 5Z" fill="#20a020" />
          </Icon>
        </BarCell>
        <WindowButtons>
          <button type="button" aria-label="Minimizar">
            <svg width="9" height="9" viewBox="0 0 9 9"><path d="M0 8H8" stroke="#66808c" strokeWidth="2" /></svg>
          </button>
          <button type="button" aria-label="Restaurar">
            <svg width="9" height="9" viewBox="0 0 9 9"><path d="M.5 3.500h5v4h-5zM2.500 3.500v-3h6v5h-3M2.500 1H8" stroke="#66808c" fill="none" /></svg>
          </button>
          <button type="button" aria-label="Cerrar">
            <svg width="9" height="9" viewBox="0 0 9 9"><path d="M1 1L8 8M8 1L1 8" stroke="#66808c" strokeWidth="1.5" /></svg>
          </button>
        </WindowButtons>
      </TopBar>
      <Body>
        <Sidebar>
          <SideFold type="button" aria-label="Subir">
            <Chevron up />
          </SideFold>
          <ToolList>
            {TOOLS.map(([name, drawing], n) => (
              <ToolButton key={name} type="button" aria-label={name} $active={n === 0}>
                <Icon>{drawing}</Icon>
              </ToolButton>
            ))}
          </ToolList>
          <SideFold type="button" aria-label="Bajar" $light>
            <Chevron />
          </SideFold>
          <SideFooter>
            <ToolButton type="button" aria-label="Opciones de trazado">
              <Icon>
                <path d="M6 4H13L16 7V14H6Z" fill="#f4f4f4" stroke="#777" />
                <path d="M8 8L13 12" stroke="#f03030" />
                <circle cx="5" cy="4" r="4" fill="#109020" />
                <path d="M5 2V6.500" stroke="#fff" strokeWidth="1.5" />
                <path d="M11 9L17 15" stroke="#333" strokeWidth="1.8" />
                <path d="M12 16H18L15 18Z" fill="#000" />
              </Icon>
            </ToolButton>
            <ToolButton type="button" aria-label="Más">
              <Icon>
                <path d="M2 7h3M7.500 7h3M13 7h3" stroke="#333" strokeWidth="3" />
                <path d="M11 12H17L14 15Z" fill="#000" />
              </Icon>
            </ToolButton>
          </SideFooter>
        </Sidebar>
        <Charts>
          <Panel $grow>
            <Plot>
              <PriceChart />
              <Heading>
                M<br />
                Ripple ($1)
              </Heading>
              {FIBS.map(([text, x, y, color]) => (
                <FibLabel key={`${x}${y}`} $color={color} style={{ left: leftPct(x), top: `${((y - 23) / 629) * 100}%` }}>
                  {text}
                </FibLabel>
              ))}
              {PRICE_NOTES.map(([text, x, y, w, h]) => (
                <Note
                  key={text}
                  $w={w}
                  $h={h}
                  $blue={text[0] === '('}
                  style={{ left: leftPct(x), top: `${((y - 23) / 629) * 100}%` }}
                >
                  {text}
                </Note>
              ))}
              <Source>IT-Finance.com - Tiempo Real</Source>
              <Legend>
                <LegendTools>
                  <button type="button" aria-label="Bajar panel">
                    <svg width="10" height="10" viewBox="0 0 9 9"><path d="M0 0H9V9H0Z" fill="#fff" /><path d="M3.500 1h2v3H8L4.500 8 1 4h2.500z" fill="#e81818" /></svg>
                  </button>
                  <button type="button" aria-label="Subir panel">
                    <svg width="10" height="10" viewBox="0 0 9 9"><path d="M0 0H9V9H0Z" fill="#fff" /><path d="M3.500 8h2V5H8L4.500 1 1 5h2.500z" fill="#18a818" /></svg>
                  </button>
                  <button type="button" aria-label="Cerrar panel">
                    <CloseIcon />
                  </button>
                </LegendTools>
                <LegendName>
                  <Swatch $fill="#d8e2e8" $outline />
                  Precio
                </LegendName>
                <LegendButton type="button" aria-label="Lista">
                  <svg width="9" height="9" viewBox="0 0 9 9"><path d="M0 1.500h1.500M3 1.500h6M0 4.500h1.500M3 4.500h6M0 7.500h1.500M3 7.500h6" stroke="#222" /></svg>
                </LegendButton>
                <LegendName>
                  <Swatch $fill="#d8e2e8" $outline />
                  Cierre (W)
                </LegendName>
                <LegendName>
                  <Swatch $fill="#768c98" />
                  Tunel Domenec v4 (t t t t t)
                </LegendName>
                <LegendName>
                  <Swatch $fill="linear-gradient(90deg, #000 1px, #00d8d8 1px 2px, #10a010 2px 4px, #f01010 4px 6px, #f0c 6px)" />
                  Control Total Doc v.6
                </LegendName>
                <LegendName>
                  <Swatch $fill="#000" />
                  Multi Avisos (3 f 3 1,5 70 f f)
                </LegendName>
              </Legend>
            </Plot>
            <Scale name="price" />
          </Panel>
          <SubPanel name="trains" title="Sistema de trenes Doc v4 (f f)" swatch="linear-gradient(90deg, #768c98 4px, #000 4px)">
            <TrainsChart />
          </SubPanel>
          <SubPanel name="willy" title="Willy Doc (t)" swatch="#768c98">
            <WillyChart />
          </SubPanel>
          <SubPanel name="awesome" title="Awesome Evolution Doc" swatch="#768c98">
            <AwesomeChart />
          </SubPanel>
          <SubPanel name="force" title="Barra Fuerza Fondo Mercado v4 (f)" swatch="linear-gradient(90deg, #000 4px, #768c98 4px)">
            <ForceChart />
          </SubPanel>
          <DateRow>
            <DateAxis>
              {DATES.map((d) => (
                <DateLabel key={d.i} style={{ left: leftPct(barX(d.i)) }}>
                  {d.text}
                </DateLabel>
              ))}
              <DateLabel style={{ left: leftPct(barX(51)) }} />
            </DateAxis>
          </DateRow>
        </Charts>
      </Body>
      <BottomBar>
        <DrawButton type="button" aria-label="Herramientas de dibujo">
          <Icon size={16}>
            <path d="M1 3L6 15L10 3M2 16L8 8" stroke="#444" />
            <path d="M2 2L11 14" stroke="#e02020" />
            <path d="M15 2L17 4L10 15L8 16L8 13Z" fill="#ffd820" stroke="#806000" />
          </Icon>
        </DrawButton>
        <BottomButton type="button" aria-label="Compartir">
          <Icon size={16}>
            <path d="M13 4L4 9L13 14" stroke="#fff" strokeWidth="1.5" />
            <circle cx="13.500" cy="3.500" r="2.500" fill="#fff" />
            <circle cx="3.500" cy="9" r="2.500" fill="#fff" />
            <circle cx="12" cy="14" r="2.500" fill="#fff" />
            <path d="M12 15H18L15 18Z" fill="#000" />
          </Icon>
        </BottomButton>
        <BottomButton type="button" aria-label="Chat">
          <Icon size={16}>
            <path d="M1 1H10V11H1Z" fill="#e8f2fa" stroke="#88a" />
            <path d="M4 6H17V14H10L7 17V14H4Z" fill="#3a7ae8" />
            <path d="M7 10h1.500M10 10h1.500M13 10h1.500" stroke="#fff" strokeWidth="1.5" />
          </Icon>
        </BottomButton>
        <BottomButton type="button" aria-label="Informe">
          <Icon size={16}>
            <path d="M3 1H15V17H3Z" fill="#f4f4f4" stroke="#555" />
            <path d="M5 4H13M5 13H13M5 15H10" stroke="#333" />
            <path d="M5 10L8 7L10 10L13 6" stroke="#e02020" strokeWidth="1.5" />
            <path d="M5 8L9 11" stroke="#20a020" />
          </Icon>
        </BottomButton>
        <BottomButton type="button" aria-label="Libro de órdenes">
          <Icon size={16}>
            <path d="M1 2h8v3H1zM4 6h5v3H4zM2 10h7v3H2zM4 14h5v3H4z" fill="#20a820" />
            <path d="M9 2h4v3H9zM9 6h8v3H9zM9 10h5v3H9zM9 14h7v3H9z" fill="#e83030" />
            <path d="M9 1V18" stroke="#206020" />
          </Icon>
        </BottomButton>
        <BottomButton type="button" aria-label="Ventanas">
          <Icon size={16}>
            <rect x="1" y="1" width="11" height="9" fill="#fff" stroke="#1c60c8" strokeWidth="1.5" />
            <path d="M1 2.500H12" stroke="#1c60c8" strokeWidth="3" />
            <rect x="5" y="6" width="12" height="11" fill="#fff" stroke="#1c60c8" strokeWidth="1.5" />
            <path d="M5 7.500H17" stroke="#1c60c8" strokeWidth="3" />
            <path d="M6 15L9 11L12 15L16 10" stroke="#20a020" strokeWidth="1.3" />
          </Icon>
        </BottomButton>
        <Collapse type="button">«</Collapse>
        <ScrollButton type="button" aria-label="Desplazar a la izquierda">‹</ScrollButton>
        <Track>
          <Thumb />
        </Track>
        <ScrollButton type="button" aria-label="Desplazar a la derecha">›</ScrollButton>
        <ZoomGroup>
          <BottomButton type="button" aria-label="Deshacer">
            <Icon size={14}>
              <path d="M4 6H10Q16 7 13 16" stroke="#1878e0" strokeWidth="3" />
              <path d="M0 7L7 1V13Z" fill="#1878e0" />
            </Icon>
          </BottomButton>
          <BottomButton type="button" aria-label="Rehacer">
            <Icon size={14}>
              <path d="M14 6H8Q2 7 5 16" stroke="#7ca8cc" strokeWidth="3" />
              <path d="M18 7L11 1V13Z" fill="#7ca8cc" />
            </Icon>
          </BottomButton>
          <BottomButton type="button" aria-label="Ajustes">
            <Icon size={16}>
              <path d="M11 1h6v13h-6z" fill="#28b828" />
              <path d="M1 10h6v7H1z" fill="#e83030" />
              <path d="M3 15L10 8M9 3.500V7.500H13" stroke="#222" strokeWidth="4" />
              <path d="M3 15L10 8M9 4V7.500H13" stroke="#f4f4f4" strokeWidth="2" />
            </Icon>
          </BottomButton>
          <BottomButton type="button" aria-label="Ajustar zoom">
            <Icon size={16}>
              <Magnifier />
              <path d="M16 1V11M14 3L16 1L18 3M14 9L16 11L18 9M0 16H8M2 14L0 16L2 18M6 14L8 16L6 18" stroke="#1030f0" />
            </Icon>
          </BottomButton>
          <BottomButton type="button" aria-label="Alejar">
            <Icon size={16}>
              <Magnifier>
                <path d="M4.500 7H9.500" stroke="#1030f0" strokeWidth="1.8" />
              </Magnifier>
            </Icon>
          </BottomButton>
          <BottomButton type="button" aria-label="Acercar">
            <Icon size={16}>
              <Magnifier>
                <path d="M4.500 7H9.500M7 4.500V9.500" stroke="#1030f0" strokeWidth="1.8" />
              </Magnifier>
            </Icon>
          </BottomButton>
          <BottomButton type="button" aria-label="Teclado">
            <Icon size={16}>
              <path d="M0 4H18" stroke="#222" strokeWidth="3" strokeDasharray="2 1" />
              <path d="M9 8V15M6 12L9 16L12 12" stroke="#1860d0" strokeWidth="2" />
            </Icon>
          </BottomButton>
        </ZoomGroup>
      </BottomBar>
    </Window>
  </>
);

const GlobalStyle = createGlobalStyle`
  body {
    margin: 0;
  }
  * {
    box-sizing: border-box;
  }
  button, select {
    font: inherit;
    color: inherit;
    padding: 0;
    margin: 0;
    border: 0;
    background: none;
  }
`;

const Window = styled.div`
  display: flex;
  flex-direction: column;
  height: 100vh;
  overflow: hidden;
  background: #9bb9c6;
  color: #000;
  font: bold 9px/12px 'Liberation Sans', Arial, sans-serif;
`;

const TopBar = styled.header`
  display: flex;
  flex: 0 0 23px;
  border-top: 1px solid #48606c;
  border-bottom: 2px solid #54707c;
  background: linear-gradient(#bcd8e6, #9ab9c7);
  white-space: nowrap;
`;

const BarCell = styled.div`
  display: flex;
  align-items: center;
  gap: 4px;
  min-width: ${(p) => p.$w}px;
  padding: 0 ${(p) => (p.$narrow ? 1 : 4)}px;
  border-right: 1px solid #7896a4;
  border-left: ${(p) => (p.$start ? '1px solid #7896a4' : 0)};
  padding-left: ${(p) => (p.$start ? 1 : 4)}px;
  padding-right: 0;
`;

const PickerBox = styled.label`
  display: flex;
  flex: 1;
  align-items: center;
  justify-content: space-between;
  padding-right: 5px;
`;

const PickerSelect = styled.select`
  appearance: none;
  field-sizing: content;
`;

const FrameButton = styled.button`
  height: 16px;
  padding: 0 2px;
  border: 1px solid #7492a0;
  border-radius: 3px;
  background: ${(p) => (p.$active ? '#86a2b0' : 'transparent')};
`;

const TextButton = styled.button`
  display: flex;
  align-items: center;
  gap: 4px;
`;

const Status = styled.div`
  display: flex;
  flex: 1;
  align-items: center;
  gap: 4px;
  padding-left: 7px;
`;

const InfoMark = styled.span`
  width: 10px;
  height: 10px;
  margin-right: 4px;
  border: 1px solid #a8b4ba;
  background: #f0f2f3;
  color: #848f95;
  line-height: 9px;
  text-align: center;
`;

const Dot = styled.span`
  width: 7px;
  height: 7px;
  margin-right: 2px;
  border-radius: 50%;
  background: #4ca000;
`;

const Change = styled.span`
  padding: 0 2px;
  border: 1px solid #38c838;
  border-radius: 3px;
  background: #54e454;
  color: #fff;
  font-weight: normal;
`;

const NameBadge = styled.span`
  padding: 0 1px;
  border: 1px solid #3c98cc;
  border-radius: 3px;
  background: #60c0ec;
  font-size: 10px;
  font-weight: normal;
`;

const WindowButtons = styled.div`
  display: flex;
  align-items: center;
  gap: 5px;
  padding: 0 2px 0 5px;

  button {
    display: flex;
  }
`;

const Body = styled.div`
  display: flex;
  flex: 1;
  min-height: 0;
`;

const Sidebar = styled.nav`
  display: flex;
  flex-direction: column;
  flex: 0 0 28px;
  border-left: 1px solid #48606c;
  border-right: 1px solid #6c8894;
`;

const SideFold = styled.button`
  display: flex;
  align-items: center;
  justify-content: center;
  flex: 0 0 ${(p) => (p.$light ? 12 : 10)}px;
  border-bottom: 1px solid #6c8894;
  background: ${(p) => (p.$light ? 'linear-gradient(#c4dce8, #a4c0cc)' : 'none')};
  border-top: ${(p) => (p.$light ? '1px solid #6c8894' : 0)};
`;

const ToolList = styled.div`
  display: flex;
  flex-direction: column;
  flex: 1 1 0;
  min-height: 0;
  padding-top: 2px;
  overflow: hidden;
`;

const ToolButton = styled.button`
  display: flex;
  align-items: center;
  justify-content: center;
  flex: 0 0 22px;
  margin: 0 2px;
  border: 1px solid ${(p) => (p.$active ? '#6c8894' : 'transparent')};
  border-radius: 3px;
  background: ${(p) => (p.$active ? '#8ca6b2' : 'none')};
`;

const SideFooter = styled.div`
  display: flex;
  flex-direction: column;
  justify-content: space-between;
  flex: 0 0 54px;
  padding: 3px 0 0;
`;

const Charts = styled.main`
  display: flex;
  flex: 1;
  flex-direction: column;
  min-width: 0;
  background: #fff;
`;

const Panel = styled.section`
  display: flex;
  flex: ${(p) => (p.$grow ? '1 1 0' : `0 0 ${p.$height}px`)};
  min-height: 0;
`;

const Plot = styled.div`
  position: relative;
  flex: 1;
  min-width: 0;
  overflow: hidden;

  &::after {
    content: '';
    position: absolute;
    inset: 0 0 auto;
    height: 1px;
    background: #6c8894;
  }
`;

const ChartSvg = styled.svg`
  display: block;
  width: 100%;
  height: 100%;
`;

const ScaleColumn = styled.div`
  position: relative;
  flex: 0 0 36px;
  border-left: 1px solid #6c8894;
  border-top: 1px solid #6c8894;
  overflow: hidden;
`;

const ScaleLabel = styled.span`
  position: absolute;
  left: 3px;
  height: 13px;
  transform: translateY(-50%);
  border: 1px solid ${(p) => (p.$boxed ? '#78909c' : 'transparent')};
  border-right-width: ${(p) => (p.children.length > 6 ? 0 : 1)}px;
  background: ${(p) => (p.$boxed ? '#f3f5f8' : 'none')};
  color: ${(p) => p.$color || '#000'};
  line-height: 11px;
  white-space: nowrap;

  &::before {
    content: '';
    position: absolute;
    top: 5px;
    left: -4px;
    width: 3px;
    height: 1px;
    background: ${(p) => p.$color || '#6c8894'};
  }
`;

const Heading = styled.h1`
  position: absolute;
  top: 14px;
  left: 10px;
  margin: 0;
  font-size: 24px;
  line-height: 28px;
`;

const Source = styled.small`
  position: absolute;
  bottom: 0;
  left: 2px;
  font-size: 10px;
  line-height: 10px;
  font-weight: normal;
`;

const FibLabel = styled.span`
  position: absolute;
  transform: translate(-50%, -50%);
  color: ${(p) => p.$color};
  white-space: nowrap;
`;

const Note = styled.span`
  position: absolute;
  display: flex;
  align-items: center;
  justify-content: center;
  width: ${(p) => p.$w}px;
  height: ${(p) => p.$h}px;
  transform: translate(-50%, -50%);
  border: 1px solid #5c90f0;
  border-radius: 3px;
  background: ${(p) => (p.$blue || p.$h === 24 ? 'rgba(255, 255, 255, 0.4)' : 'rgba(255, 255, 255, 0.2)')};
  color: ${(p) => (p.$blue ? '#2000d0' : '#000')};
  font-size: ${(p) => (p.$h === 24 ? 13 : 11)}px;
  font-weight: normal;
`;

const Legend = styled.div`
  position: absolute;
  top: 0;
  left: 0;
  z-index: 1;
  display: flex;
  height: 16px;
  border: 1px solid #6c8894;
  border-width: 1px 0 1px;
  background: #ccdae2;
  white-space: nowrap;
`;

const LegendTools = styled.div`
  display: flex;
  align-items: center;
  gap: 4px;
  padding: 0 3px;
  border-right: 1px solid #6c8894;

  button {
    display: flex;
  }
`;

const LegendButton = styled.button`
  display: flex;
  align-items: center;
  padding: 0 3px;
  border-right: 1px solid #6c8894;
`;

const LegendName = styled.span`
  display: flex;
  align-items: center;
  gap: 5px;
  padding: 0 5px 0 4px;
  border-right: 1px solid #6c8894;
`;

const Swatch = styled.i`
  width: 8px;
  height: 8px;
  border: ${(p) => (p.$outline ? '1px solid #78909c' : 0)};
  background: ${(p) => p.$fill};
`;

const DateRow = styled.div`
  flex: 0 0 15px;
  padding-right: 36px;
`;

const DateAxis = styled.div`
  position: relative;
  height: 100%;
  border-top: 1px solid #6c8894;
`;

const DateLabel = styled.span`
  position: absolute;
  top: 3px;
  transform: translateX(-50%);
  font-size: 10px;

  &::before {
    content: '';
    position: absolute;
    top: -3px;
    left: 50%;
    width: 1px;
    height: 3px;
    background: #6c8894;
  }
`;

const BottomBar = styled.footer`
  display: flex;
  align-items: center;
  flex: 0 0 21px;
  border-top: 1px solid #54707c;
`;

const DrawButton = styled.button`
  display: flex;
  align-items: center;
  justify-content: center;
  width: 28px;
  height: 20px;
  background: #88a0ac;
`;

const BottomButton = styled.button`
  display: flex;
  align-items: center;
  justify-content: center;
  width: 21px;
  height: 20px;
`;

const Collapse = styled.button`
  width: 14px;
  color: #445c68;
  font-size: 13px;
  font-weight: normal;
`;

const ScrollButton = styled.button`
  width: 13px;
  height: 13px;
  border: 1px solid #6c8894;
  border-radius: 2px;
  background: linear-gradient(#c4dce8, #a4c0cc);
  font-size: 13px;
  line-height: 10px;
`;

const Track = styled.div`
  flex: 1;
  height: 13px;
  border: 1px solid #6c8894;
  border-width: 1px 0;
`;

const Thumb = styled.div`
  height: 100%;
  margin-left: 20%;
  border-left: 1px solid #6c8894;
  background: linear-gradient(#bcd8e4, #a0becc);
`;

const ZoomGroup = styled.div`
  display: flex;
  gap: 1px;
  padding-left: 3px;
  margin-right: -6px;
`;

export default App;
